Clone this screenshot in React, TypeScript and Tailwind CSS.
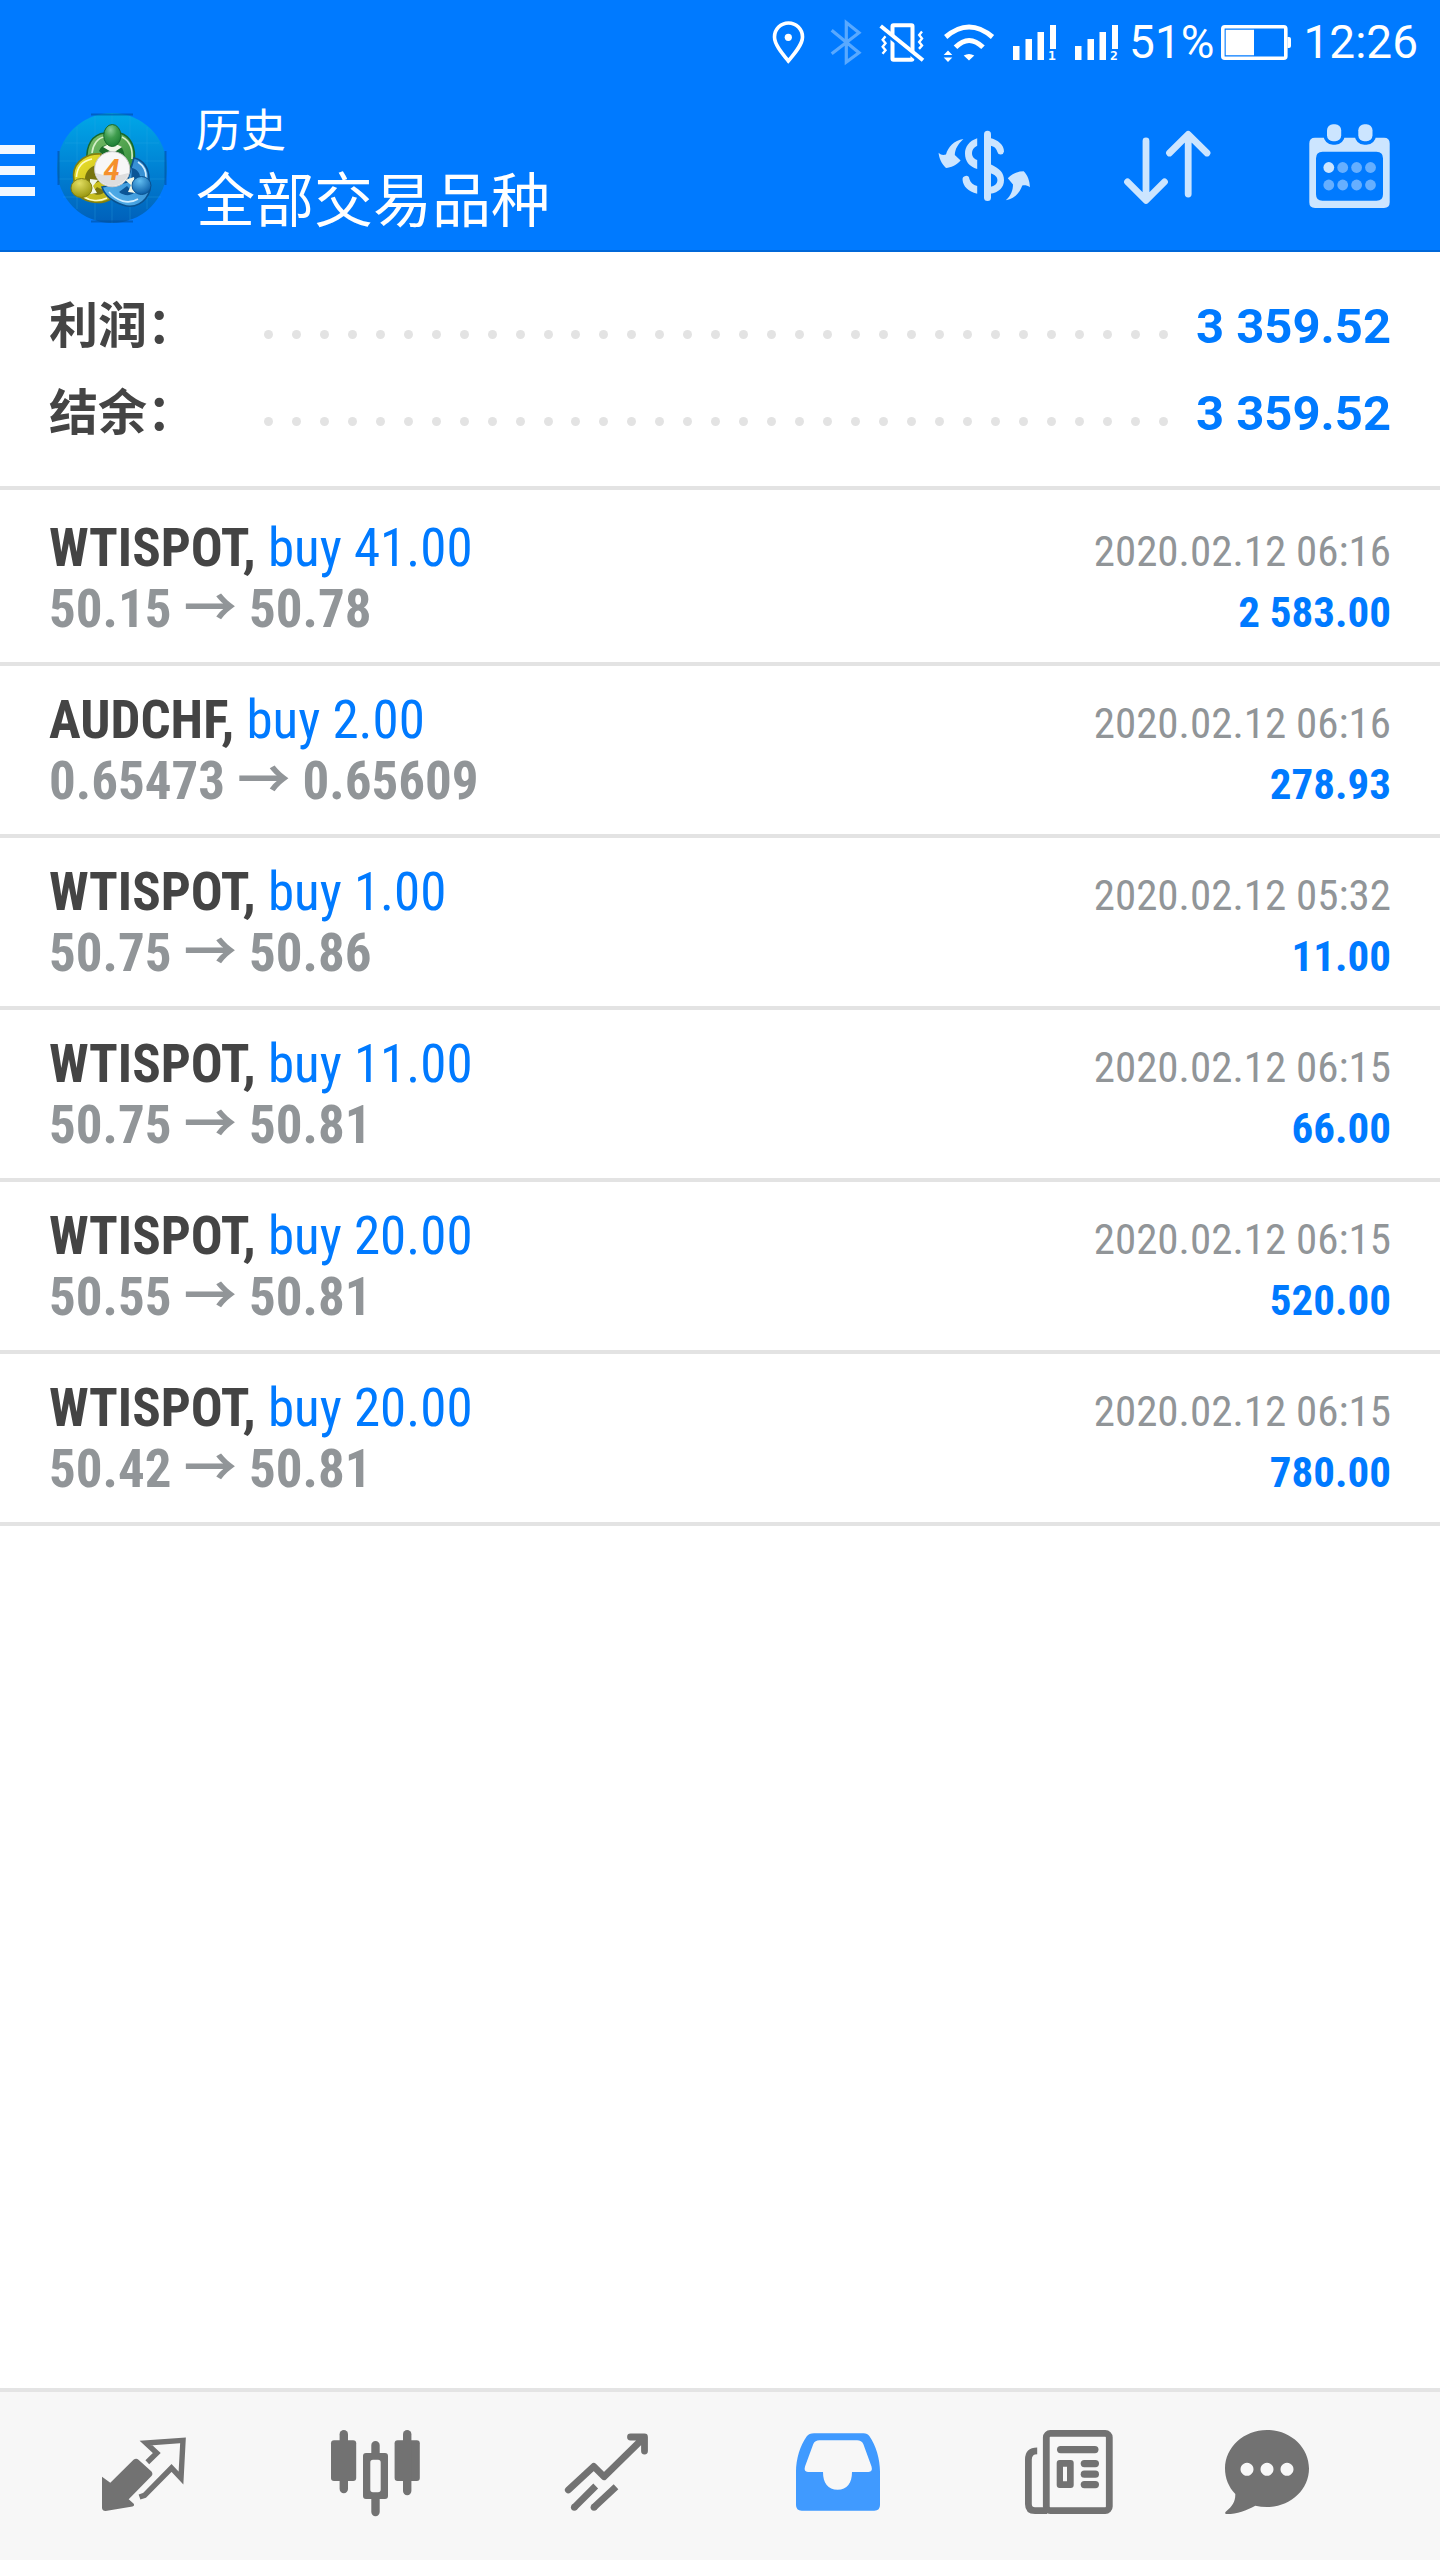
import type { ReactNode } from "react";

interface Deal {
    id: number;
    symbol: string;
    volume: string;
    open: string;
    close: string;
    time: string;
    profit: string;
}

const deals: Deal[] = [
    { id: 1, symbol: "WTISPOT", volume: "41.00", open: "50.15", close: "50.78", time: "2020.02.12 06:16", profit: "2 583.00" },
    { id: 2, symbol: "AUDCHF", volume: "2.00", open: "0.65473", close: "0.65609", time: "2020.02.12 06:16", profit: "278.93" },
    { id: 3, symbol: "WTISPOT", volume: "1.00", open: "50.75", close: "50.86", time: "2020.02.12 05:32", profit: "11.00" },
    { id: 4, symbol: "WTISPOT", volume: "11.00", open: "50.75", close: "50.81", time: "2020.02.12 06:15", profit: "66.00" },
    { id: 5, symbol: "WTISPOT", volume: "20.00", open: "50.55", close: "50.81", time: "2020.02.12 06:15", profit: "520.00" },
    { id: 6, symbol: "WTISPOT", volume: "20.00", open: "50.42", close: "50.81", time: "2020.02.12 06:15", profit: "780.00" },
];

const summary = [
    { label: "利润：", value: "3 359.52" },
    { label: "结余：", value: "3 359.52" },
];

function Signal({ sim }: { sim: string }) {
    return (
        <svg width="46" height="48" viewBox="0 0 46 48" fill="#fff">
            <path d="M2 28h6.5v14H2zM14.5 21H21v21h-6.5zM26.5 14H33v28h-6.5zM39 7h6v24h-6z" />
            <text x="37" y="42" fontSize="13" fontWeight="700" className="font-['DejaVu_Sans_Mono',monospace]">{sim}</text>
        </svg>
    );
}

function StatusBar() {
    return (
        <div className="flex h-[84px] items-center justify-end pr-[22px] text-[46px] leading-none text-white">
            <div className="mr-[10px] flex items-center gap-4">
                <svg width="40" height="48" viewBox="0 0 40 48" fill="none">
                    <path d="M19.3 43C12 34 5.5 26 5.5 19a14 14 0 0 1 28 0C33.5 26 27 34 19.3 43Z" stroke="#fff" strokeWidth="3.6" />
                    <circle cx="19.3" cy="19.3" r="3.6" fill="#fff" />
                </svg>
                <svg width="38" height="48" viewBox="0 0 38 48" fill="none">
                    <path d="M6.7 12.3 34 34.7 21.3 44V4.5L34 14.7 6.7 35.7" stroke="#59a9ff" strokeWidth="3.2" />
                </svg>
                <svg width="46" height="48" viewBox="0 0 46 48" fill="none">
                    <rect x="13.5" y="7.2" width="20" height="34.6" rx="1" stroke="#fff" strokeWidth="4" />
                    <path d="M6.5 18.3l-2.8 3.4 2.8 3.6-2.8 3.5 2.8 3.4-3 3.5M43 13.5l-2.8 3.4 2.8 3.6-2.8 3.5 2.8 3.4-3 3.5" stroke="#fff" strokeWidth="2.4" />
                    <path d="M5 14.5 40 43" stroke="#007aff" strokeWidth="3" />
                    <path d="M1.7 8 44 42.3" stroke="#fff" strokeWidth="4" />
                </svg>
                <svg width="54" height="48" viewBox="0 0 54 48" fill="none">
                    <path d="M4.7 19Q28-1 51.5 19M14.5 29.3Q28 15.5 42 29.3" stroke="#fff" strokeWidth="5" />
                    <path d="M22.7 37.6q5.3-3.4 10.6 0L28 42.5zM7 32.5l4.3 4.5H2.7zM2.7 39.5h8.6L7 44z" fill="#fff" />
                </svg>
                <Signal sim="1" />
                <Signal sim="2" />
            </div>
            <span>51%</span>
            <svg className="ml-[5px] mr-1" width="72" height="48" viewBox="0 0 72 48">
                <rect x="3.8" y="8.8" width="63" height="31.4" rx="2" fill="none" stroke="#fff" strokeWidth="3.6" />
                <path d="M6.7 11.7H35V37.3H6.7zM68.5 19H70q2 0 2 2v7q0 2-2 2h-1.5z" fill="#fff" />
            </svg>
            <span className="ml-2">12:26</span>
        </div>
    );
}

function Logo() {
    return (
        <svg width="110" height="110" viewBox="0 0 110 110">
            <defs>
                <linearGradient id="sky" x1="0" y1="0" x2="0" y2="1">
                    <stop offset="0" stopColor="#00a8e8" />
                    <stop offset="0.5" stopColor="#0082d4" />
                    <stop offset="1" stopColor="#0060ba" />
                </linearGradient>
                <linearGradient id="greenBody" x1="0" y1="0" x2="1" y2="1">
                    <stop offset="0" stopColor="#7dc06c" />
                    <stop offset="1" stopColor="#2c8a35" />
                </linearGradient>
                <linearGradient id="yellowBody" x1="0" y1="0" x2="1" y2="1">
                    <stop offset="0" stopColor="#f1e52c" />
                    <stop offset="1" stopColor="#b0a818" />
                </linearGradient>
                <linearGradient id="blueBody" x1="1" y1="0" x2="0" y2="1">
                    <stop offset="0" stopColor="#2f86cc" />
                    <stop offset="1" stopColor="#56b4ee" />
                </linearGradient>
                <radialGradient id="green" cx="0.4" cy="0.25" r="0.75">
                    <stop offset="0" stopColor="#8ccf98" />
                    <stop offset="0.5" stopColor="#3f9d4e" />
                    <stop offset="1" stopColor="#1d7f34" />
                </radialGradient>
                <radialGradient id="yellow" cx="0.4" cy="0.25" r="0.75">
                    <stop offset="0" stopColor="#e2de62" />
                    <stop offset="1" stopColor="#98960f" />
                </radialGradient>
                <radialGradient id="blue" cx="0.4" cy="0.25" r="0.75">
                    <stop offset="0" stopColor="#62bdf0" />
                    <stop offset="1" stopColor="#0a5ea8" />
                </radialGradient>
            </defs>
            <circle cx="55" cy="55" r="55" fill="url(#sky)" />
            <path d="M20 14V96M38 3V107M55 0V110M73 3V107M90 14V96M8 30H102M1 48H109M1 66H109M6 84H104" stroke="#2aa5e6" strokeOpacity="0.3" strokeWidth="1" />
            <path d="M34 1.5H76M1.5 38V72M108.5 38V72M34 108.5H76" stroke="#004f9e" strokeOpacity="0.6" strokeWidth="2" />
            <path d="M30 47C29 33 35 21 48 20H63C74 23 79 35 77 49L68 62 55 44Z" fill="url(#greenBody)" stroke="#17692a" strokeWidth="1.6" />
            <path d="M35 40C36 31 41 25 47 24M75 46C76 34 71 27 65 24" fill="none" stroke="#d5efc8" strokeWidth="1.6" />
            <path d="M42 38C44 33 48 31 51 33L55 39 60 33C65 31 68 40 68 47L55 50Z" fill="#1b6d2a" />
            <path d="M44 41C32 40 17 47 16.5 62L18 78C25 89 42 93 54 86L62 77 42 68Z" fill="url(#yellowBody)" stroke="#827f10" strokeWidth="1.6" />
            <path d="M35 46C25 48 20 55 19.5 64M27 84C33 88 42 89 50 85" fill="none" stroke="#fffcc0" strokeWidth="1.6" />
            <path d="M39 52C32 54 28 60 28 66L35 72 43 68ZM35 80C40 83 46 82 48 78L40 74Z" fill="#77740e" />
            <path d="M77 45C87 47 92 56 92 66L93 77C89 90 77 96 66 92C57 89 48 83 45 74L70 69Z" fill="url(#blueBody)" stroke="#0a5290" strokeWidth="1.6" />
            <path d="M81 49C87 53 89.5 59 89 65M52 79C60 88 71 92 81 86" fill="none" stroke="#d0edff" strokeWidth="1.6" />
            <path d="M75 55C80 56 83 60 83 64L74 69ZM62 79C67 83 73 83 77 80L70 73Z" fill="#0b5596" />
            <path d="M46 34l4-2h11l4 2-9 6ZM33 66l8 1-5 6 4 7-7 1zM77 64l-9 3 6 5-3 7 8 1z" fill="#f0f6e8" />
            <ellipse cx="55.3" cy="22.5" rx="8.6" ry="11" fill="url(#green)" stroke="#17692a" />
            <ellipse cx="24.5" cy="75" rx="10.5" ry="9.5" fill="url(#yellow)" stroke="#827f10" />
            <ellipse cx="84.5" cy="72.5" rx="9.5" ry="9" fill="url(#blue)" stroke="#0a5290" />
            <circle cx="55.2" cy="56.2" r="17.6" fill="#f7f7f7" stroke="#c9c9c9" />
            <path d="M38.5 60q16 5 33 0A17 17 0 0 1 38.5 60Z" fill="#dedede" />
            <text x="54.5" y="66.5" fontSize="29" fontStyle="italic" fontWeight="700" textAnchor="middle" fill="#f5902c">4</text>
        </svg>
    );
}

function Header() {
    return (
        <header className="bg-[#007aff] shadow-[inset_0_-2px_0_#0068d9]">
            <StatusBar />
            <div className="flex h-[168px] items-center pr-[42px] text-white">
                <button aria-label="Menu" className="flex w-[35px] flex-col gap-3 pt-1">
                    <span className="h-[9px] w-full bg-[#f2f8ff]" />
                    <span className="h-[9px] w-full bg-[#f2f8ff]" />
                    <span className="h-[9px] w-full bg-[#f2f8ff]" />
                </button>
                <div className="ml-[22px]">
                    <Logo />
                </div>
                <div className="ml-[29px] flex-1 pt-1">
                    <p className="text-[45px] leading-[64px]">历史</p>
                    <h1 className="text-[59px] leading-[76px]">全部交易品种</h1>
                </div>
                <div className="flex gap-[87px]">
                    <button aria-label="Symbols">
                        <svg width="96" height="96" viewBox="0 0 96 96" fill="#cce5ff">
                            <path d="M27.4 19C22 24 19 29 18.8 35l5.8 5.5C20 45.5 15 47.5 10 48 5.5 44 3 38 2.6 32.8 5 35 7 35.5 10 34.5 12 27 18 20.5 27.4 19Z" />
                            <path d="M69.8 80.3C75 76 77 70 77 64.5l-5.2-6.2C76.5 53.5 82 51.3 87.7 51.3 91.5 55 93.8 61 93.9 67.3 91.5 65.5 89 65 86.3 65.5 83.5 73 78.5 79 69.8 80.3Z" />
                            <rect x="48" y="10.7" width="7" height="70.3" rx="3.5" />
                            <path d="M41.2 18.3C33 21 29 27 29 33.5 29 41 33 46.5 41.2 49V40C37.5 38.5 36 36.5 36 33 36 30 37.5 27.5 41.2 25.7Z" />
                            <path d="M54 18.1C62 20 68 25 68 31.5a3.4 3.6 0 0 1-6.6.5C60.5 28.5 58.5 26.5 54 25.5Z" />
                            <path d="M54 44C64 48.5 68 53 68 60 68 67.5 63 72.5 54 73.8V66.8C59 66 61.4 63.5 61.4 60 61.4 57 59.5 55 54 53Z" />
                            <path d="M41.2 73.7C32 71.5 27 66 26.6 60a3.4 3.6 0 0 1 6.8-1C34.5 62.5 37 65 41.2 66Z" />
                        </svg>
                    </button>
                    <button aria-label="Sort">
                        <svg width="96" height="96" viewBox="0 0 96 96" fill="none" stroke="#cce5ff" strokeWidth="6.8" strokeLinecap="round" strokeLinejoin="round">
                            <path d="M27 21V79M8.5 61.8 27 80.3 45.5 61.8M69.2 74V16M50.5 33 69.2 14.3 88 33" />
                        </svg>
                    </button>
                    <button aria-label="Period">
                        <svg width="96" height="96" viewBox="0 0 96 96" fill="#cce5ff">
                            <path fillRule="evenodd" d="M13 17.7H82q5.7 0 5.7 5.7V82.3q0 5.7-5.7 5.7H13q-5.7 0-5.7-5.7V23.4q0-5.7 5.7-5.7ZM20.5 31.7q-6.5 0-6.5 6.5v36q0 6.5 6.5 6.5h54q6.5 0 6.5-6.5v-36q0-6.5-6.5-6.5Z" />
                            <g stroke="#007aff" strokeWidth="7" paintOrder="stroke">
                                <rect x="25" y="4.3" width="14.2" height="17" rx="6" />
                                <rect x="56.3" y="4.3" width="14.2" height="17" rx="6" />
                            </g>
                            <circle cx="26.8" cy="47.5" r="5.4" />
                            <g fill="#66afff">
                                <circle cx="40.7" cy="47.5" r="5.4" />
                                <circle cx="54.6" cy="47.5" r="5.4" />
                                <circle cx="68.5" cy="47.5" r="5.4" />
                                <circle cx="26.8" cy="65" r="5.4" />
                                <circle cx="40.7" cy="65" r="5.4" />
                                <circle cx="54.6" cy="65" r="5.4" />
                                <circle cx="68.5" cy="65" r="5.4" />
                            </g>
                        </svg>
                    </button>
                </div>
            </div>
        </header>
    );
}

function DealRow({ deal }: { deal: Deal }) {
    return (
        <li className="border-b-4 border-[#e3e3e3] px-[49px] py-6 font-['Roboto_Condensed',Roboto,'Noto_Sans_CJK_SC',sans-serif] leading-[60px] text-[#919598]">
            <div className="flex h-[60px] items-baseline justify-between">
                <span className="text-[53px] text-[#007aff]">
                    <b className="text-[#444444]">{deal.symbol},</b> buy {deal.volume}
                </span>
                <span className="text-[43px]">{deal.time}</span>
            </div>
            <div className="flex h-[60px] items-baseline justify-between font-bold">
                <span className="text-[53px]">
                    {deal.open} <span className="font-['Noto_Sans_CJK_SC',sans-serif] leading-none">→</span> {deal.close}
                </span>
                <span className="text-[43px] text-[#007aff]">{deal.profit}</span>
            </div>
        </li>
    );
}

function Tab({ label, active, last, children }: { label: string; active?: boolean; last?: boolean; children: ReactNode }) {
    return (
        <button
            aria-label={label}
            className={`flex items-center justify-center ${last ? "w-[163px]" : "flex-1"} ${active ? "text-[#409aff]" : "text-[#727272]"}`}
        >
            <svg width="96" height="96" viewBox="0 0 96 96" fill="currentColor">
                {children}
            </svg>
        </button>
    );
}

function TabBar() {
    return (
        <nav className="mt-auto flex h-[172px] border-t-4 border-[#e4e4e4] bg-[#f7f7f7] pr-[92px] pl-7">
            <Tab label="Quotes">
                <path d="M6 48.7 14.3 54.7 37.5 31.8q2.8-2 5 0L55.5 43.5q1.8 2.5 0 4.5L32.7 71.3 38 76q.5 2.3-1.5 2.6L9.5 83Q6.3 83 6 80Z" />
                <path d="M51.3 34.3 60.8 25 50 15 87 12.3 85 50 75.5 40 48.5 67.3 43.5 69" fill="none" stroke="currentColor" strokeWidth="5.4" />
            </Tab>
            <Tab label="Charts">
                <rect x="4" y="12.3" width="25.2" height="40.7" rx="3" />
                <rect x="12.6" y="2" width="8.4" height="63.3" rx="4.2" />
                <path fillRule="evenodd" d="M39 25H58q3 0 3 3V68q0 3-3 3H39q-3 0-3-3V28q0-3 3-3ZM46 31.7q-2.7 0-2.7 2.7V61.6q0 2.7 2.7 2.7h5q2.7 0 2.7-2.7V34.4q0-2.7-2.7-2.7Z" />
                <path d="M44.3 27V17.2a4.2 4.2 0 0 1 8.4 0V27ZM44.3 69V84.1a4.2 4.2 0 0 0 8.4 0V69Z" />
                <rect x="67.6" y="12.3" width="25.2" height="40.7" rx="3" />
                <rect x="76" y="2" width="8.4" height="65.3" rx="4.2" />
            </Tab>
            <Tab label="Trade">
                <g fill="none" stroke="currentColor" strokeWidth="6.8">
                    <path d="M9.3 62 34.7 38.4 45 48.7 85 9.5M71.5 9H85.5V23" strokeLinecap="round" strokeLinejoin="round" />
                    <path d="M15.3 79.3 36.7 58M35 79.3 57 58.7" />
                </g>
                <circle cx="15.3" cy="79.3" r="3.4" />
                <circle cx="35" cy="79.3" r="3.4" />
            </Tab>
            <Tab label="History" active>
                <path
                    fillRule="evenodd"
                    d="M24 5.3H73.5Q77.5 5.3 79.5 8.3C86 18 90 31 90 43.7V77q0 5.7-5.7 5.7H11.7Q6 82.7 6 77V43.7C6 31 10 18 16.8 8.3Q19 5.3 24 5.3ZM29.5 12.3Q25 12.3 23.3 16L15 38.5Q13.5 43.8 18 44H33C33 55 38 61.7 47.6 61.7S62 55 62 44H78.5Q83 43.8 81.5 38.5L73.3 16Q71.5 12.3 67 12.3Z"
                />
            </Tab>
            <Tab label="News">
                <g fill="none" stroke="currentColor" strokeWidth="6.8">
                    <rect x="25.3" y="5.4" width="63" height="77.2" rx="4" />
                    <path d="M16.2 22.8Q7.4 22.8 7.4 31.5V76Q7.4 82.6 14 82.6H26" />
                </g>
                <rect x="36" y="18" width="41.5" height="7.2" rx="3.6" />
                <path fillRule="evenodd" d="M38.7 32H49.7q3 0 3 3V57q0 3-3 3H38.7q-3 0-3-3V35q0-3 3-3ZM42 38.7V53.3H46V38.7Z" />
                <rect x="59.7" y="32" width="18.3" height="7.2" rx="3.6" />
                <rect x="59.7" y="42.6" width="18.3" height="7.2" rx="3.6" />
                <rect x="59.7" y="53" width="18.3" height="7.2" rx="3.6" />
            </Tab>
            <Tab label="Chat" last>
                <path
                    fillRule="evenodd"
                    d="M48 2C71.2 2 90 19.2 90 40.5S71.2 79 48 79Q42 79 36.3 77.7C27.5 82.5 18 86 8 86 6 86 5.5 84.7 7 83.5 13.5 78 16.5 73.5 16.3 66 9.5 59 6 50 6 40.5 6 19.2 24.8 2 48 2ZM28 34.8a6.5 6.5 0 1 0 .01 0ZM48 34.8a6.5 6.5 0 1 0 .01 0ZM68 34.8a6.5 6.5 0 1 0 .01 0Z"
                />
            </Tab>
        </nav>
    );
}

export default function App() {
    return (
        <div className="flex min-h-screen flex-col bg-white font-[Roboto,'Noto_Sans_CJK_SC',sans-serif]">
            <Header />
            <main>
                <dl className="border-b-4 border-[#e3e3e3] px-[49px] pt-[31px] pb-[29px] text-[49px] leading-[87px] font-bold">
                    {summary.map((item) => (
                        <div key={item.label} className="flex h-[87px] items-center">
                            <dt className="w-[215px] text-[#444444]">{item.label}</dt>
                            <dd className="flex flex-1 items-center text-[#007aff]">
                                <span className="mr-7 flex flex-1 justify-between pt-4">
                                    {Array.from({ length: 33 }, (_, i) => (
                                        <i key={i} className="size-[9px] rounded-full bg-[#e3e3e3]" />
                                    ))}
                                </span>
                                {item.value}
                            </dd>
                        </div>
                    ))}
                </dl>
                <ul className="pt-1">
                    {deals.map((deal) => (
                        <DealRow key={deal.id} deal={deal} />
                    ))}
                </ul>
            </main>
            <TabBar />
        </div>
    );
}
